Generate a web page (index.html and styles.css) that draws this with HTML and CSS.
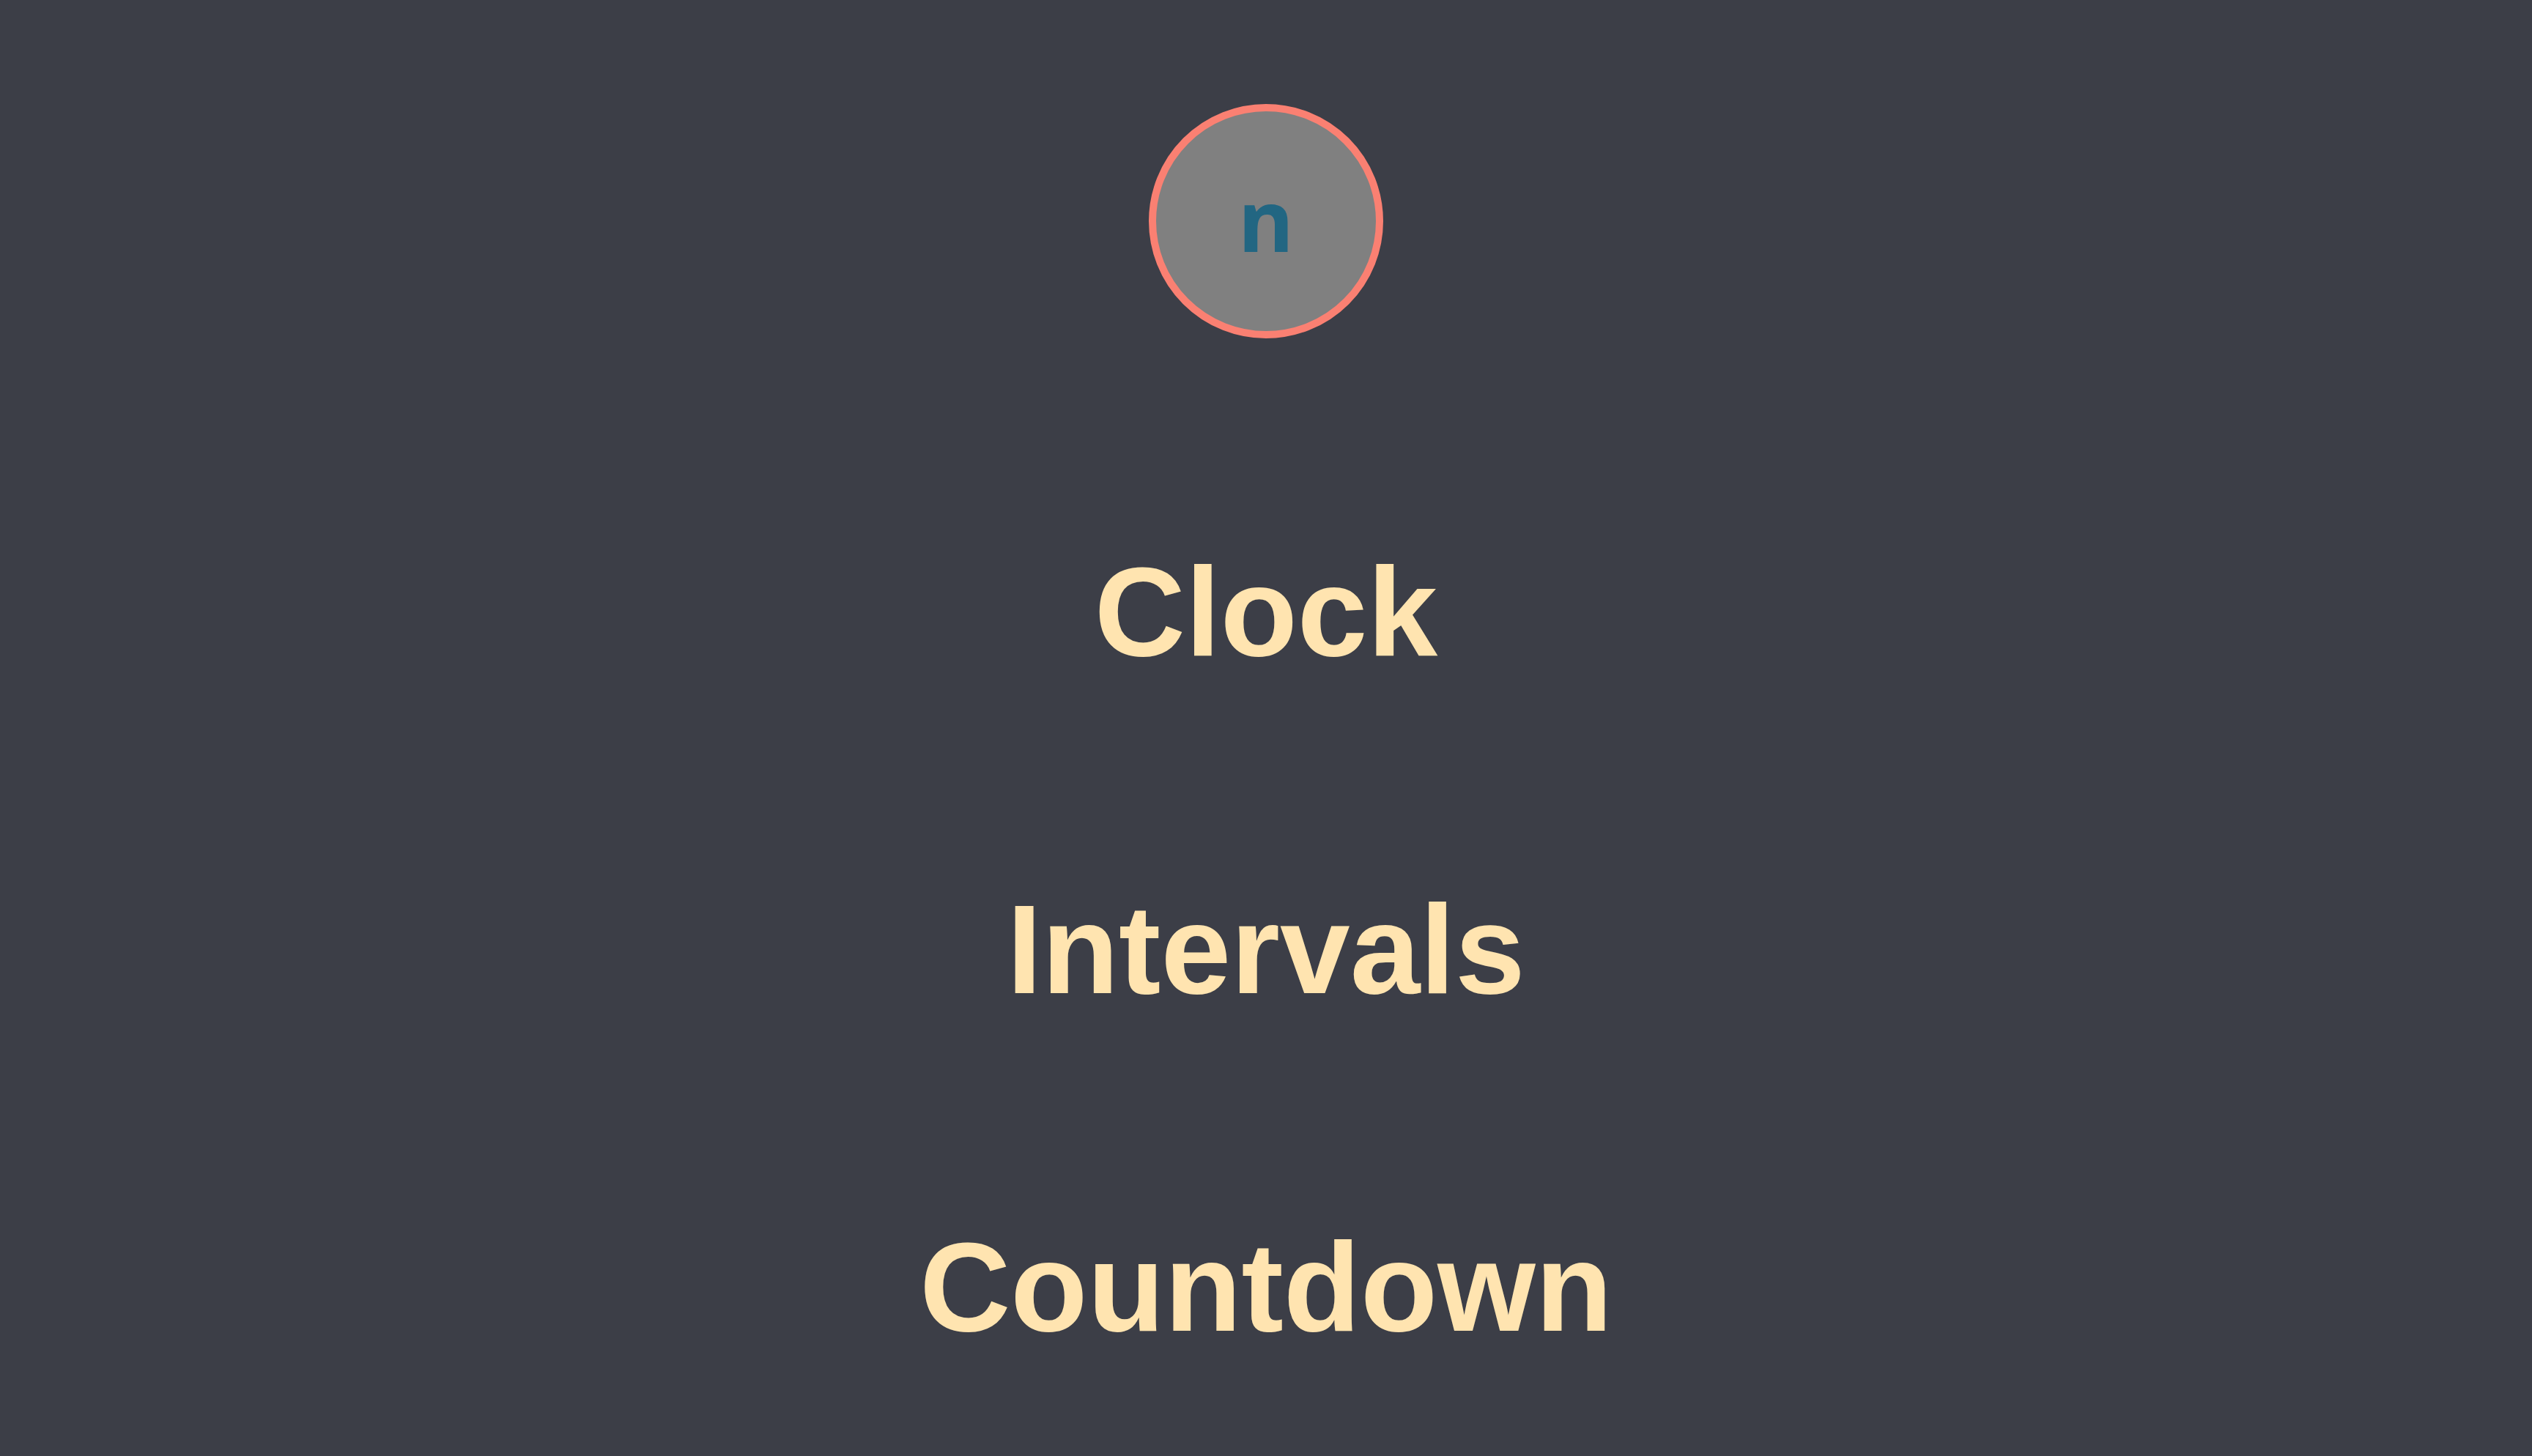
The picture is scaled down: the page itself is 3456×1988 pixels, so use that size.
FILE: index.html
```html
<!DOCTYPE html>
<html lang="en">
<head>
  <meta charset="utf-8">
  <meta name="viewport" content="width=device-width, initial-scale=1">
  <title>Clock</title>
  <link rel="stylesheet" href="styles.css">
</head>
<body>
  <main class="menu">
    <button class="menu-toggle" type="button">n</button>
    <nav class="menu-links">
      <a class="menu-link" href="#clock">Clock</a>
      <a class="menu-link" href="#intervals">Intervals</a>
      <a class="menu-link" href="#countdown">Countdown</a>
    </nav>
  </main>
</body>
</html>
```
FILE: styles.css
```css
* {
  box-sizing: border-box;
}

body {
  margin: 0;
  min-height: 100vh;
  background: #3c3e47;
  font-family: "Liberation Sans", Arial, sans-serif;
}

.menu {
  display: flex;
  flex-direction: column;
  align-items: center;
  padding-top: 142px;
}

.menu-toggle {
  width: 320px;
  height: 320px;
  padding: 0 0 6px;
  border: 10px solid #fa8072;
  border-radius: 50%;
  background: #808080;
  color: #226682;
  font-family: "Noto Sans", sans-serif;
  font-size: 116px;
  font-weight: 700;
}

.menu-links {
  display: flex;
  flex-direction: column;
  align-items: center;
  gap: 261px;
  padding-top: 273px;
}

.menu-link {
  color: #ffe4b0;
  font-size: 172px;
  font-weight: 700;
  line-height: 200px;
  text-decoration: none;
}
```
